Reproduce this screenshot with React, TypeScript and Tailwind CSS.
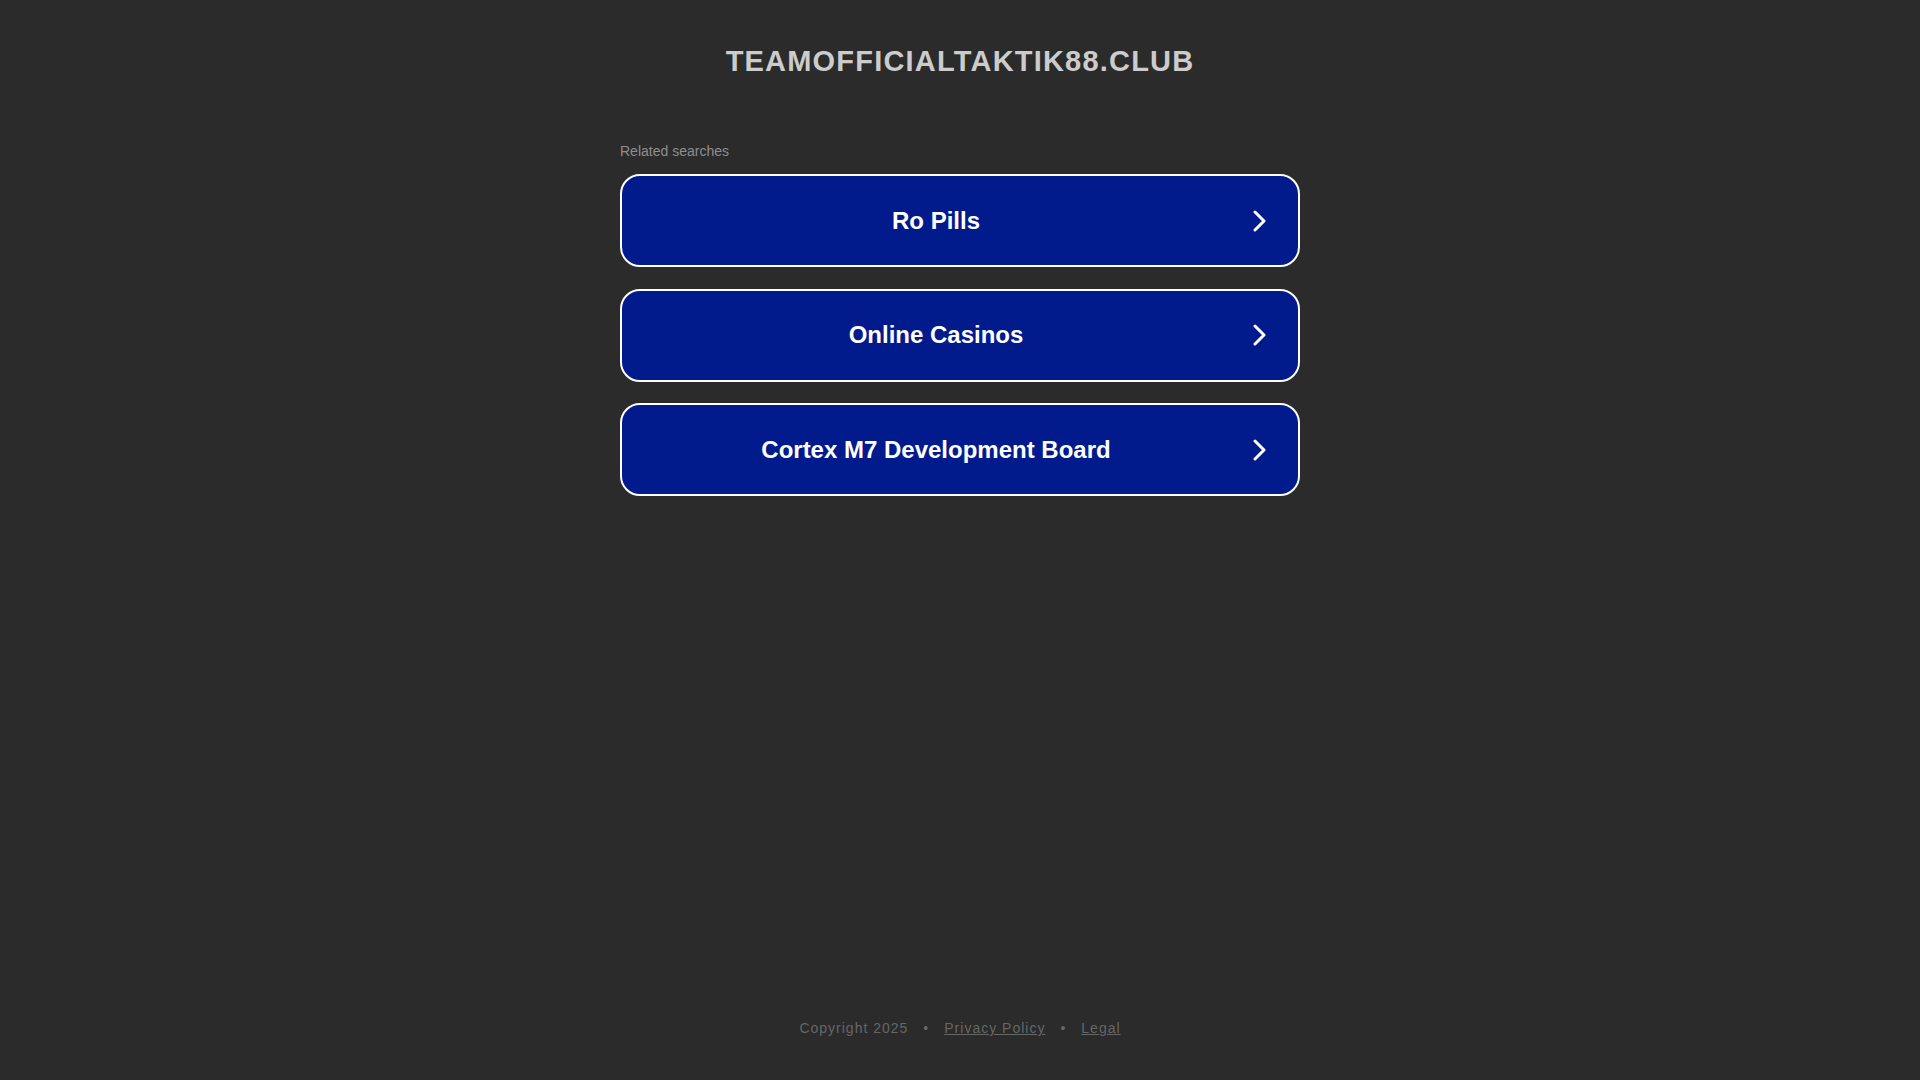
const searches = ["Ro Pills", "Online Casinos", "Cortex M7 Development Board"];

const Chevron = () => (
  <svg width="14" height="22" viewBox="0 0 14 22" fill="none" className="shrink-0">
    <path d="M2 2L11 11L2 20" stroke="#ffffff" strokeWidth="3" strokeLinecap="round" strokeLinejoin="round" />
  </svg>
);

export default function App() {
  return (
    <div className="min-h-screen bg-[#2b2b2b] flex flex-col items-center font-['Liberation_Sans',Arial,sans-serif]">
      <h1 className="mt-[44px] text-[29px] leading-[34px] font-bold tracking-[1.2px] text-[#cccccc]">
        TEAMOFFICIALTAKTIK88.CLUB
      </h1>

      <div className="mt-[65px] w-[680px] flex flex-col">
        <p className="text-[14px] leading-[16px] text-[#8e8e8e]">Related searches</p>
        <div className="mt-[15px] flex flex-col gap-[21.5px]">
          {searches.map((s) => (
            <a
              key={s}
              href="#"
              className="h-[93px] flex items-center rounded-[20px] border-2 border-white bg-[#011a8c] pr-[31px]"
            >
              <span className="flex-1 text-center text-[24px] font-bold text-white">{s}</span>
              <span className="ml-[3px] flex items-center">
                <Chevron />
              </span>
            </a>
          ))}
        </div>
      </div>

      <footer className="mt-auto pb-[42px] text-[14px] leading-[20px] tracking-[1px] text-[#666666]">
        <span>Copyright 2025</span>
        <span className="mx-[15px]">•</span>
        <a href="#" className="underline">Privacy Policy</a>
        <span className="mx-[15px]">•</span>
        <a href="#" className="underline">Legal</a>
      </footer>
    </div>
  );
}
